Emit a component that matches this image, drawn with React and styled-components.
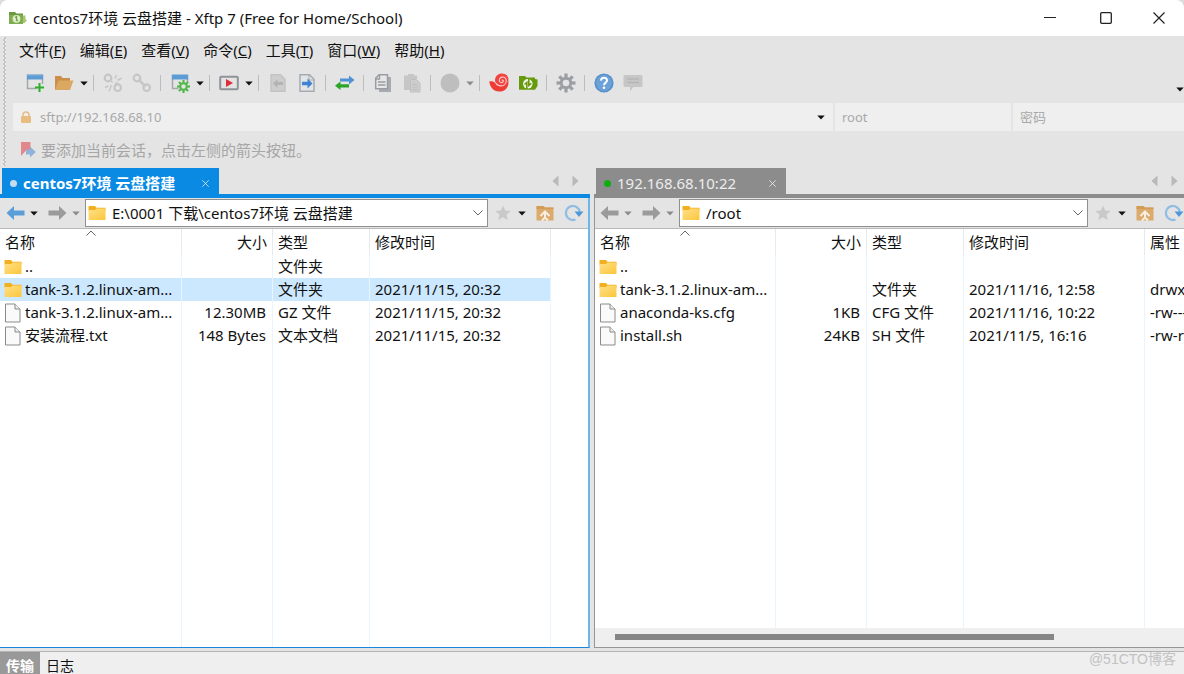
import React, { useState } from "react"
import styled, { createGlobalStyle } from "styled-components"

const GlobalStyle = createGlobalStyle`
  * {
    box-sizing: border-box;
  }

  body {
    margin: 0;
    background: #d9dcdf;
  }

  body, button, input, table {
    font-family: "Noto Sans", "Noto Sans CJK SC", sans-serif;
    font-size: 15px;
    line-height: 22px;
    color: #111;
  }

  button {
    padding: 0;
    border: 0;
    background: none;
    cursor: default;
  }

  svg {
    display: block;
    flex: none;
  }
`

const Window = styled.div`
  display: flex;
  flex-direction: column;
  height: 100vh;
  background: #e4e4e4;
  border-radius: 8px 8px 0 0;
  overflow: hidden;
`

const TitleBar = styled.header`
  display: flex;
  align-items: center;
  height: 36px;
  flex: none;
  padding-left: 8px;
  background: #fff;
`

const Title = styled.h1`
  flex: 1;
  margin: 0 0 0 6px;
  font-size: 15px;
  font-weight: 400;
  line-height: 20px;
`

const WindowButton = styled.button`
  display: flex;
  justify-content: center;
  align-items: center;
  width: 56px;
  height: 36px;

  &:last-child {
    width: 50px;
  }
`

const Chrome = styled.div`
  display: flex;
  flex: none;
  height: 132px;
`

const Grip = styled.div`
  width: 3px;
  margin: 1px 7px 2px 3px;
  background: conic-gradient(#c4c4c4 25%, #f0f0f0 0 50%, #c4c4c4 0 75%, #f0f0f0 0) 0 0 / 3px 4px;
`

const Bars = styled.div`
  flex: 1;
  min-width: 0;
`

const MenuBar = styled.nav`
  display: flex;
  gap: 14px;
  padding: 3px 0 6px 6px;
`

const Toolbar = styled.div`
  display: flex;
  align-items: center;
  height: 32px;
  padding-left: 7px;
`

const ToolButton = styled.button`
  display: flex;
  justify-content: center;
  align-items: center;
  width: 29px;
  height: 26px;
`

const CaretButton = styled.button`
  display: flex;
  justify-content: center;
  align-items: center;
  width: ${(props) => props.$width || 11}px;
  height: 26px;
`

const Separator = styled.div`
  width: 1px;
  height: 16px;
  margin: 0 4px;
  background: #bdbdbd;
`

const OverflowButton = styled(CaretButton)`
  margin-left: auto;
  align-self: flex-end;
  height: 20px;
  width: 8px;
`

const AddressBar = styled.form`
  display: flex;
  gap: 2px;
  height: 28px;
  margin-top: 4px;
`

const Field = styled.label`
  display: flex;
  align-items: center;
  flex: ${(props) => (props.$width ? "none" : 1)};
  width: ${(props) => (props.$width ? props.$width + "px" : "auto")};
  padding: 0 7px;
  background: #efefef;
`

const FieldInput = styled.input`
  flex: 1;
  min-width: 0;
  padding: 0;
  border: 0;
  outline: 0;
  background: none;
  font-size: 13px;
  color: #a9a9a9;

  &::placeholder {
    color: #a9a9a9;
    opacity: 1;
  }
`

const LockIcon = styled.svg`
  margin-right: 8px;
`

const Hint = styled.p`
  display: flex;
  align-items: center;
  gap: 5px;
  margin: 0;
  padding: 8px 0 0 7px;
  color: #a6a6a6;
`

const Panes = styled.main`
  display: grid;
  grid-template-columns: minmax(0, 1fr) minmax(0, 1fr);
  gap: 4px;
  flex: 1;
  min-height: 0;
`

const PaneBox = styled.section`
  display: flex;
  flex-direction: column;
  min-width: 0;
  min-height: 0;
`

const TabStrip = styled.div`
  display: flex;
  align-items: center;
  height: 30px;
  flex: none;
  padding: 0 ${(props) => props.$end}px 0 2px;
  border-bottom: 4px solid ${(props) => props.$color};
`

const Tab = styled.div`
  display: flex;
  align-items: center;
  height: 26px;
  width: ${(props) => (props.$active ? 217 : 190)}px;
  margin-right: auto;
  padding: 4px 8px 0;
  background: ${(props) => props.$color};
`

const TabName = styled.button`
  flex: 1;
  text-align: left;
  color: ${(props) => (props.$active ? "#fff" : "#ececec")};
  font-weight: ${(props) => (props.$active ? 700 : 400)};
`

const Dot = styled.span`
  width: 7px;
  height: 7px;
  margin-right: 6px;
  border-radius: 50%;
  background: ${(props) => props.$color};
`

const TabClose = styled.button`
  display: flex;
  justify-content: center;
  width: 11px;
`

const ScrollTabs = styled.button`
  display: flex;
  justify-content: center;
  width: 20px;
`

const PaneBody = styled.div`
  display: flex;
  flex-direction: column;
  flex: 1;
  min-height: 0;
  border: 0 solid ${(props) => (props.$active ? "#1a86d8" : "#969696")};
  border-width: ${(props) => (props.$active ? "0 2px 1px 0" : "0 0 1px 1px")};
  border-right-color: #6db6e8;
`

const PathBar = styled.div`
  display: flex;
  align-items: center;
  height: 31px;
  flex: none;
  padding: 0 ${(props) => props.$end}px 0 ${(props) => props.$start}px;
  border-bottom: 1px solid #b9b9b9;
`

const NavButton = styled.button`
  display: flex;
  justify-content: center;
  width: 22px;
`

const NavCaret = styled(CaretButton)`
  margin-right: ${(props) => props.$gap}px;
`

const RefreshButton = styled(NavButton)`
  width: 20px;
  margin-left: 8px;
`

const PathBox = styled.div`
  display: flex;
  align-items: center;
  flex: 1;
  min-width: 0;
  height: 28px;
  margin-right: 4px;
  padding: 0 4px 0 2px;
  border: 1px solid #8f8f8f;
  background: #fff;
`

const PathInput = styled.input`
  flex: 1;
  min-width: 0;
  margin-left: 6px;
  padding: 0;
  border: 0;
  outline: 0;
  background: none;
`

const TableWrap = styled.div`
  display: grid;
  flex: 1;
  min-height: 0;
  overflow: hidden;
  background: #fff;
`

const FileTable = styled.table`
  width: 100%;
  table-layout: fixed;
  border-collapse: separate;
  border-spacing: 0;
`

const Col = styled.col`
  width: ${(props) => props.$width}px;
`

const HeadCell = styled.th`
  height: 26px;
  padding: 0 5px;
  border-right: 1px solid #e6e9ee;
  font-weight: 400;
  text-align: ${(props) => props.$align || "left"};
  white-space: nowrap;

  &:last-child {
    border-right: 0;
  }
`

// the sort mark sits on the top edge, over the column title
const SortHeadCell = styled(HeadCell)`
  position: relative;

  svg {
    position: absolute;
    top: 1px;
    left: 50%;
    margin-left: -5px;
  }
`

const Row = styled.tr`
  height: 23px;

  td:not(:last-child) {
    background: ${(props) => (props.$selected ? "#cce8ff" : "none")};
  }
`

const Cell = styled.td`
  height: ${(props) => (props.$fill ? "auto" : "23px")};
  padding: 0 6px 0 5px;
  border-right: 1px solid #eaf4fd;
  text-align: ${(props) => props.$align || "left"};
  white-space: nowrap;
  line-height: 21px;

  &:last-child {
    border-right: 0;
  }
`

const NameCell = styled(Cell)`
  padding: 0 4px;
`

const FileName = styled.span`
  display: flex;
  align-items: center;
  gap: 3px;
`

const ScrollTrack = styled.div`
  height: 19px;
  padding: 6px 20px;
  background: #efefef;
`

const ScrollThumb = styled.div`
  width: 80%;
  height: 6px;
  background: #868686;
`

const StatusBar = styled.footer`
  display: flex;
  height: 23px;
  flex: none;
  margin-top: 3px;
  border-top: 1px solid #b4b4b4;
  background: #efefef;
  overflow: hidden;
`

const StatusTab = styled.button`
  height: 28px;
  padding: 0 6px;
  font-size: 14px;
  background: ${(props) => (props.$active ? "#999" : "none")};
  color: ${(props) => (props.$active ? "#fff" : "#111")};
  font-weight: ${(props) => (props.$active ? 700 : 400)};
`

const Watermark = styled.span`
  margin: 0 8px 0 auto;
  font-family: "Liberation Sans", "Noto Sans CJK SC", sans-serif;
  font-size: 14px;
  line-height: 14px;
  color: #c2c2c2;
`

const Caret = ({ color = "#111" }) => (
  <svg width="8" height="5" viewBox="0 0 8 5">
    <path d="M0.3 0.5h7.4L4 4.6z" fill={color} />
  </svg>
)

const AppIcon = () => (
  <svg width="19" height="16" viewBox="0 0 19 16">
    <path d="M1 2h6l1.500 1.500H15V14H1z" fill="#6a9a3c" />
    <path d="M1 5h14v9H1z" fill="#7fae50" />
    <path d="M15 5.500h2.500V9L19 10.500 16.500 13H15z" fill="#a8c878" />
    <circle cx="8.500" cy="8.800" r="3.900" fill="#dfeccb" />
    <path d="M7 7.500l1.500-1v4M10 10l-1.500 1" stroke="#6f9f43" strokeWidth="1.200" fill="none" />
  </svg>
)

const NewSessionIcon = () => (
  <svg width="20" height="20" viewBox="0 0 20 20">
    <path d="M2.500 6v9.500h9M17.500 6v5" stroke="#a3a8ad" strokeWidth="1.500" fill="none" />
    <path d="M1.800 1.500h16.400v5H1.800z" fill="#5c9bd4" />
    <path d="M1.800 1.500h16.400v1H1.800z" fill="#8fb2d0" />
    <path d="M14.500 10v9M10 14.500h9" stroke="#2fae2a" strokeWidth="2" />
  </svg>
)

const OpenIcon = () => (
  <svg width="20" height="20" viewBox="0 0 20 20">
    <path d="M1 3h6l1.500 2H16v4H5l-3 8H1z" fill="#c98f4b" />
    <path d="M4.500 7.500H19.500L16 17H1z" fill="#dba862" />
  </svg>
)

const ChainIcon = ({ broken }) => (
  <svg width="20" height="20" viewBox="0 0 20 20" fill="none" stroke="#c6c6c6">
    <circle cx="5" cy="5" r="3.300" strokeWidth="2.200" />
    <circle cx="14.700" cy="14.700" r="3.300" strokeWidth="2.200" />
    {broken ? (
      <path d="M12 5.500 13.500 2M14.500 7.500 18.500 5M2 14.500l3.500-1.500M6 18l1.500-3M8 8l1.500 1.500M12 10.500l3-.5M8 12l-.5 3" strokeWidth="1.500" />
    ) : (
      <path d="M6.500 6.500l7 7" strokeWidth="2.500" />
    )}
  </svg>
)

const Gear = ({ color, hole }) => (
  <g fill={color}>
    {[0, 45, 90, 135].map((angle) => (
      <rect key={angle} x="-1.600" y="-9.500" width="3.200" height="19" transform={`rotate(${angle})`} />
    ))}
    <circle r="6.200" />
    <circle r="3.300" fill={hole} />
  </g>
)

const SessionSettingsIcon = () => (
  <svg width="20" height="20" viewBox="0 0 20 20">
    <path d="M2.500 6v9.500h6M17.500 6v3" stroke="#a3a8ad" strokeWidth="1.500" fill="none" />
    <path d="M1.800 1.500h16.400v5H1.800z" fill="#5c9bd4" />
    <g transform="translate(13.500 13.500) scale(.68)">
      <Gear color="#4fb848" hole="#e4e4e4" />
    </g>
  </svg>
)

const RunIcon = () => (
  <svg width="20" height="20" viewBox="0 0 20 20">
    <rect x="1.200" y="3.700" width="17.600" height="12.600" rx="1" fill="#e4e4e4" stroke="#8e9499" strokeWidth="2" />
    <path d="M7 6v8l7-4z" fill="#e02d3c" />
  </svg>
)

const PageArrowIcon = ({ back }) => (
  <svg width="20" height="20" viewBox="0 0 20 20">
    <path
      d="M3 1.700h9.500l4.500 4.500v12.100H3z"
      fill={back ? "#cdcdcd" : "#e2e4e6"}
      stroke={back ? "#c3c3c3" : "#a5abb1"}
      strokeWidth="1.500"
    />
    {back ? (
      <path d="M5 10.500 9.500 6v3H15v3H9.500v3z" fill="#b3b3b3" />
    ) : (
      <>
        <path d="M12 2v5h5" fill="none" stroke="#a5abb1" />
        <path d="M15.500 10.500 10.500 5.500v3.300H5v3.400h5.500v3.300z" fill="#3f84d3" />
      </>
    )}
  </svg>
)

const TransferIcon = () => (
  <svg width="22" height="20" viewBox="0 0 22 20">
    <path d="M20.500 7 15 2.500v3H6v3h9v3z" fill="#5191d6" />
    <path d="M1 12.800 6.500 8.500v2.800H15v3.200H6.500V17z" fill="#2aa52a" />
  </svg>
)

const CopyIcon = () => (
  <svg width="20" height="20" viewBox="0 0 20 20">
    <path d="M7 4h11v15H6v-3z" fill="#a8abae" />
    <path d="M2.700 5.200 6 1.700h8.500v14H2.700z" fill="#e6e6e6" stroke="#999da1" strokeWidth="1.500" />
    <path d="M6.500 2v4H3M5 9h7.500M5 12h7.500" stroke="#999da1" strokeWidth="1.400" fill="none" />
  </svg>
)

const PasteIcon = () => (
  <svg width="20" height="20" viewBox="0 0 20 20">
    <path d="M2 2.500h4V1h6v1.500h3V6H8v11H2z" fill="#c6c6c6" />
    <path d="M8.500 6.500h6l3.500 3.500v9H8.500z" fill="#cdcdcd" stroke="#c0c0c0" />
    <path d="M10.500 11.500h5M10.500 14h5M10.500 16.500h5" stroke="#bcbcbc" />
  </svg>
)

const CircleIcon = () => (
  <svg width="20" height="20" viewBox="0 0 20 20">
    <circle cx="10" cy="10" r="9.500" fill="#bebebe" />
  </svg>
)

const SwirlIcon = () => (
  <svg width="20" height="20" viewBox="0 0 20 20">
    <path d="M0.300 8.500c2.200-.4 4.600 0 6 1.500 1.600 2 4 3.200 6.500 2.800 3-.4 5.200-2.500 6.400-5.300C20.500 14 16 18.800 10 18.600 4.500 18.400.8 14 .3 8.500z" fill="#ee3b35" />
    <path d="M6 7c0-3.800 3.200-6.500 7-6.500 4 0 6.500 2.800 6.400 6.300-.2 3.300-3 5.900-6.300 5.900C9.300 12.700 6 10.500 6 7z" fill="#f04540" />
    <path
      d="M12.800 7.500c.6-.9 1.800-.2 1.500.8-.4 1.500-2.700 1.700-3.600.4-1.200-1.800 0-4.200 2.300-4.600 2.700-.4 4.600 1.600 4.300 4.200-.4 3-3 4.900-6 4.600-1.800-.2-3.400-1.200-4.500-2.600"
      fill="none"
      stroke="#f6cfce"
      strokeWidth="1.100"
    />
  </svg>
)

const XftpIcon = () => (
  <svg width="20" height="20" viewBox="0 0 20 20">
    <path d="M1 3h6l1.500 1.500H17V6l2.500.5V13L17 16.800H1z" fill="#67990d" />
    <circle cx="9.800" cy="10.800" r="4.800" fill="#f2f6e6" />
    <path d="M8.800 16v-6.500L6.500 11.500M10.800 5.500v6.800l2.500-2" fill="none" stroke="#67990d" strokeWidth="1.600" />
  </svg>
)

const GearIcon = () => (
  <svg width="20" height="20" viewBox="-10 -10 20 20">
    <Gear color="#9b9ea2" hole="#e4e4e4" />
  </svg>
)

const HelpIcon = () => (
  <svg width="20" height="20" viewBox="0 0 20 20">
    <circle cx="10" cy="10" r="9.600" fill="#5790cb" />
    <circle cx="10" cy="10" r="8" fill="#6ba0d8" />
    <path d="M7 7.600c.2-3.800 6.200-3.600 6 0-.1 2-3 2.100-3 4.600" fill="none" stroke="#fff" strokeWidth="2" />
    <circle cx="10" cy="14.800" r="1.300" fill="#fff" />
  </svg>
)

const ChatIcon = () => (
  <svg width="20" height="20" viewBox="0 0 20 20">
    <path d="M2 2h16q1.500 0 1.500 1.500v9q0 1.500-1.500 1.500h-7.500L7 18.500V14H2Q.5 14 .5 12.500v-9Q.5 2 2 2z" fill="#c6c6c6" />
    <path d="M4 6h12M4 9.500h12" stroke="#b6b6b6" strokeWidth="1.300" />
  </svg>
)

const FlagIcon = () => (
  <svg width="16" height="18" viewBox="0 0 16 18">
    <path d="M1 1h9.500v10L6 9.500 1 15z" fill="#e2888a" />
    <path d="M15.800 11 10 5.500v3H6v5h4v3z" fill="#8fb3d9" />
  </svg>
)

const ArrowIcon = ({ color, forward }) => (
  <svg width="19" height="16" viewBox="0 0 19 16">
    <path
      d="M0.500 8 8 1v4.500h10.500v5H8V15z"
      fill={color}
      transform={forward ? "translate(19 0) scale(-1 1)" : undefined}
    />
  </svg>
)

const FolderIcon = () => (
  <svg width="18" height="16" viewBox="0 0 18 16">
    <defs>
      <linearGradient id="folder" x1="0" y1="0" x2="1" y2="1">
        <stop offset="0" stopColor="#ffe08a" />
        <stop offset="1" stopColor="#fbc63a" />
      </linearGradient>
    </defs>
    <path d="M0.500 1h6.500l1.500 1.800h9V6h-17z" fill="#f2b01e" />
    <path d="M0.500 5h6.500l1.500-1.500h9V15h-17z" fill="url(#folder)" />
  </svg>
)

const FileIcon = () => (
  <svg width="18" height="20" viewBox="0 0 18 20">
    <path d="M1.500 1h9.500l5 5v13H1.500z" fill="#fafafa" stroke="#8b8b8b" />
    <path d="M11 1v5h5" fill="#eee" stroke="#8b8b8b" />
  </svg>
)

const StarIcon = () => (
  <svg width="16" height="16" viewBox="0 0 16 16">
    <path d="M8 .5l2.200 5 5.500.5-4.200 3.600 1.300 5.400L8 12.200 3.200 15l1.300-5.400L.3 6l5.500-.5z" fill="#c9c9c9" />
  </svg>
)

const FolderUpIcon = () => (
  <svg width="18" height="16" viewBox="0 0 18 16">
    <path d="M0.500 1h7l1.500 1.500h8.500V15.500H.5z" fill="#dcab6b" />
    <path d="M0.500 1h7l1.500 1.500h8.500V4H.5z" fill="#d39c55" />
    <path d="M4.500 11 9 6.500l4.500 4.500M9 7.500v5.500M6 15.500l3-3 3 3" fill="none" stroke="#f7efe4" strokeWidth="2" />
  </svg>
)

const RefreshIcon = () => (
  <svg width="20" height="18" viewBox="0 0 20 18">
    <path d="M15.800 8A7 7 0 1 0 11.500 15.500" fill="none" stroke="#8fbce4" strokeWidth="2.200" />
    <path d="M10.500 7.500h9L15 13z" fill="#4f97d8" />
  </svg>
)

const ChevronIcon = ({ up }) => (
  <svg width="10" height="6" viewBox="0 0 10 6">
    <path d={up ? "M.5 5.500 5 1l4.500 4.500" : "M.5.5 5 5 9.500.5"} fill="none" stroke="#666" />
  </svg>
)

const SideArrow = ({ right }) => (
  <svg width="7" height="12" viewBox="0 0 7 12">
    <path d={right ? "M.5.5v11L6.500 6z" : "M6.500.5v11L.5 6z"} fill="#b9b9b9" />
  </svg>
)

const CloseIcon = ({ size, color }) => (
  <svg width={size} height={size} viewBox="0 0 12 12">
    <path d="M.5.5l11 11M11.500.5l-11 11" stroke={color} strokeWidth="1.200" />
  </svg>
)

const menus = [
  ["文件", "F"],
  ["编辑", "E"],
  ["查看", "V"],
  ["命令", "C"],
  ["工具", "T"],
  ["窗口", "W"],
  ["帮助", "H"],
]

const tools = [
  { label: "新建会话", icon: <NewSessionIcon /> },
  { label: "打开", icon: <OpenIcon />, caret: "#111" },
  null,
  { label: "断开", icon: <ChainIcon broken /> },
  { label: "重新连接", icon: <ChainIcon /> },
  null,
  { label: "会话属性", icon: <SessionSettingsIcon />, caret: "#111" },
  null,
  { label: "运行", icon: <RunIcon />, caret: "#111" },
  null,
  { label: "传到左侧", icon: <PageArrowIcon back /> },
  { label: "传到右侧", icon: <PageArrowIcon /> },
  null,
  { label: "同步", icon: <TransferIcon /> },
  null,
  { label: "复制", icon: <CopyIcon /> },
  { label: "粘贴", icon: <PasteIcon /> },
  null,
  { label: "停止", icon: <CircleIcon />, caret: "#8a8a8a" },
  null,
  { label: "Xshell", icon: <SwirlIcon /> },
  { label: "Xftp", icon: <XftpIcon /> },
  null,
  { label: "选项", icon: <GearIcon /> },
  null,
  { label: "帮助主题", icon: <HelpIcon /> },
  { label: "反馈", icon: <ChatIcon /> },
]

const localFiles = [
  { name: "..", kind: "folder", type: "文件夹" },
  { name: "tank-3.1.2.linux-am...", kind: "folder", type: "文件夹", date: "2021/11/15, 20:32" },
  { name: "tank-3.1.2.linux-am...", kind: "file", size: "12.30MB", type: "GZ 文件", date: "2021/11/15, 20:32" },
  { name: "安装流程.txt", kind: "file", size: "148 Bytes", type: "文本文档", date: "2021/11/15, 20:32" },
]

const remoteFiles = [
  { name: "..", kind: "folder" },
  { name: "tank-3.1.2.linux-am...", kind: "folder", type: "文件夹", date: "2021/11/16, 12:58", mode: "drwxr-xr-x" },
  { name: "anaconda-ks.cfg", kind: "file", size: "1KB", type: "CFG 文件", date: "2021/11/16, 10:22", mode: "-rw-------" },
  { name: "install.sh", kind: "file", size: "24KB", type: "SH 文件", date: "2021/11/5, 16:16", mode: "-rw-r--r--" },
]

function FileList({ files, showMode, initial }) {
  const [selected, setSelected] = useState(initial)

  return (
    <TableWrap>
      <FileTable>
        <colgroup>
          <Col $width={showMode ? 181 : 182} />
          <Col $width={91} />
          <Col $width={97} />
          <Col $width={181} />
          <col />
        </colgroup>
        <thead>
          <tr>
            <SortHeadCell>
              名称
              <ChevronIcon up />
            </SortHeadCell>
            <HeadCell $align="right">大小</HeadCell>
            <HeadCell>类型</HeadCell>
            <HeadCell>修改时间</HeadCell>
            <HeadCell>{showMode && "属性"}</HeadCell>
          </tr>
        </thead>
        <tbody>
          {files.map((file, i) => (
            <Row key={i} $selected={i === selected} onClick={() => setSelected(i)}>
              <NameCell>
                <FileName>
                  {file.kind === "folder" ? <FolderIcon /> : <FileIcon />}
                  {file.name}
                </FileName>
              </NameCell>
              <Cell $align="right">{file.size}</Cell>
              <Cell>{file.type}</Cell>
              <Cell>{file.date}</Cell>
              <Cell>{showMode && file.mode}</Cell>
            </Row>
          ))}
          <tr>
            {[0, 1, 2, 3, 4].map((n) => (
              <Cell key={n} $fill />
            ))}
          </tr>
        </tbody>
      </FileTable>
    </TableWrap>
  )
}

function Pane({ active, title, path, files, showMode, initial }) {
  const color = active ? "#0a8ae2" : "#8c8c8c"

  return (
    <PaneBox>
      <TabStrip $color={color} $end={active ? 5 : 0}>
        <Tab $active={active} $color={color}>
          <Dot $color={active ? "#c5dcee" : "#0fae0f"} />
          <TabName $active={active}>{title}</TabName>
          <TabClose aria-label="关闭标签">
            <CloseIcon size={7} color="#fff" />
          </TabClose>
        </Tab>
        <ScrollTabs aria-label="上一个标签">
          <SideArrow />
        </ScrollTabs>
        <ScrollTabs aria-label="下一个标签">
          <SideArrow right />
        </ScrollTabs>
      </TabStrip>
      <PaneBody $active={active}>
        <PathBar $start={active ? 4 : 3} $end={active ? 4 : 0}>
          <NavButton aria-label="后退">
            <ArrowIcon color={active ? "#5b9fd8" : "#9b9b9b"} />
          </NavButton>
          <NavCaret $width={16} $gap={4} aria-label="后退记录">
            <Caret color={active ? "#111" : "#8a8a8a"} />
          </NavCaret>
          <NavButton aria-label="前进">
            <ArrowIcon color="#9b9b9b" forward />
          </NavButton>
          <NavCaret $width={16} $gap={1} aria-label="前进记录">
            <Caret color="#8a8a8a" />
          </NavCaret>
          <PathBox>
            <FolderIcon />
            <PathInput aria-label="路径" defaultValue={path} />
            <button aria-label="展开路径">
              <ChevronIcon />
            </button>
          </PathBox>
          <NavButton aria-label="书签">
            <StarIcon />
          </NavButton>
          <NavCaret $width={16} $gap={4} aria-label="书签列表">
            <Caret />
          </NavCaret>
          <NavButton aria-label="上级目录">
            <FolderUpIcon />
          </NavButton>
          <RefreshButton aria-label="刷新">
            <RefreshIcon />
          </RefreshButton>
        </PathBar>
        <FileList files={files} showMode={showMode} initial={initial} />
        {showMode && (
          <ScrollTrack>
            <ScrollThumb />
          </ScrollTrack>
        )}
      </PaneBody>
    </PaneBox>
  )
}

export default function App() {
  return (
    <>
      <GlobalStyle />
      <Window>
        <TitleBar>
          <AppIcon />
          <Title>centos7环境 云盘搭建 - Xftp 7 (Free for Home/School)</Title>
          <WindowButton aria-label="最小化">
            <svg width="12" height="12" viewBox="0 0 12 12">
              <path d="M0 5.500h12" stroke="#222" />
            </svg>
          </WindowButton>
          <WindowButton aria-label="最大化">
            <svg width="12" height="12" viewBox="0 0 12 12">
              <rect x=".7" y=".7" width="10.600" height="10.600" rx="1" fill="none" stroke="#222" strokeWidth="1.300" />
            </svg>
          </WindowButton>
          <WindowButton aria-label="关闭">
            <CloseIcon size={12} color="#222" />
          </WindowButton>
        </TitleBar>
        <Chrome>
          <Grip />
          <Bars>
            <MenuBar>
              {menus.map(([name, key]) => (
                <button key={key}>
                  {name}(<u>{key}</u>)
                </button>
              ))}
            </MenuBar>
            <Toolbar>
              {tools.map((tool, i) =>
                tool ? (
                  <React.Fragment key={i}>
                    <ToolButton aria-label={tool.label}>{tool.icon}</ToolButton>
                    {tool.caret && (
                      <CaretButton aria-label={tool.label + "选项"}>
                        <Caret color={tool.caret} />
                      </CaretButton>
                    )}
                  </React.Fragment>
                ) : (
                  <Separator key={i} />
                )
              )}
              <OverflowButton aria-label="更多工具">
                <Caret />
              </OverflowButton>
            </Toolbar>
            <AddressBar onSubmit={(e) => e.preventDefault()}>
              <Field>
                <LockIcon width="12" height="13" viewBox="0 0 12 13">
                  <path d="M3 6V4a3 3 0 0 1 6 0v2" fill="none" stroke="#e5bd85" strokeWidth="1.500" />
                  <rect x="1" y="5" width="10" height="7" rx="1" fill="#e9bd80" />
                </LockIcon>
                <FieldInput aria-label="主机" placeholder="sftp://192.168.68.10" />
                <CaretButton type="button" aria-label="主机记录">
                  <Caret />
                </CaretButton>
              </Field>
              <Field $width={176}>
                <FieldInput aria-label="用户名" placeholder="root" />
              </Field>
              <Field $width={171}>
                <FieldInput type="password" aria-label="密码" placeholder="密码" />
              </Field>
            </AddressBar>
            <Hint>
              <FlagIcon />
              要添加当前会话，点击左侧的箭头按钮。
            </Hint>
          </Bars>
        </Chrome>
        <Panes>
          <Pane
            active
            title="centos7环境 云盘搭建"
            path={"E:\\0001 下载\\centos7环境 云盘搭建"}
            files={localFiles}
            initial={1}
          />
          <Pane title="192.168.68.10:22" path="/root" files={remoteFiles} showMode />
        </Panes>
        <StatusBar>
          <StatusTab $active>传输</StatusTab>
          <StatusTab>日志</StatusTab>
          <Watermark>@51CTO博客</Watermark>
        </StatusBar>
      </Window>
    </>
  )
}
